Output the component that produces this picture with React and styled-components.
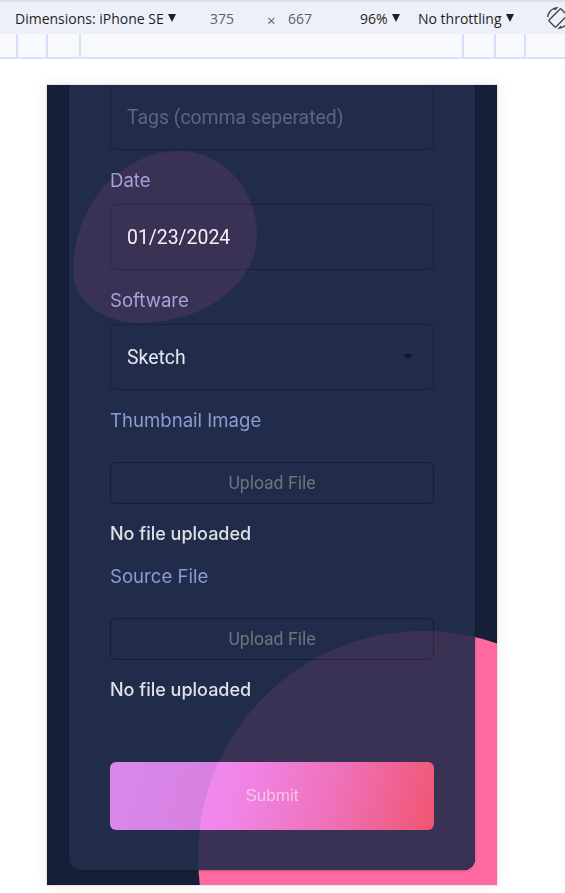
import React from 'react';
import styled, { createGlobalStyle } from 'styled-components';
import { MdScreenRotation } from 'react-icons/md';

const GlobalStyle = createGlobalStyle`
  html, body { margin: 0; padding: 0; background: #ffffff; }
  body { font-family: "Liberation Sans", Arial, sans-serif; }
  * { box-sizing: border-box; }
`;

const Page = styled.div`
  width: 565px;
  height: 893px;
  overflow: hidden;
  display: flex;
  flex-direction: column;
  background: #ffffff;
`;

const Toolbar = styled.div`
  flex: none;
  height: 34px;
  border-top: 2px solid #dcdfe5;
  background: #edf0f8;
  display: grid;
  grid-template-columns: 195px 57px 21px 72px 58px 129px 1fr;
  align-items: center;
  padding-left: 15px;
  font-family: "Open Sans", sans-serif;
  font-size: 14px;
  color: #1f1f1f;
  white-space: nowrap;
  overflow: hidden;
`;

const ToolItem = styled.span`
  display: inline-flex;
  align-items: center;
  color: ${(p) => (p.$muted ? '#5e6166' : '#1f1f1f')};
`;

const Caret = styled.span`
  width: 0;
  height: 0;
  border-left: 4.5px solid transparent;
  border-right: 4.5px solid transparent;
  border-top: 8px solid #1f1f1f;
  margin-left: 4px;
`;

const Times = styled.span`
  font-size: 15px;
  color: #5e6166;
  padding-top: 4px;
`;

const RotateIcon = styled(MdScreenRotation)`
  width: 22px;
  height: 22px;
  color: #474747;
  transform: scaleX(-1);
`;

const Ruler = styled.div`
  flex: none;
  height: 25px;
  background: #f7f9fd;
  border-bottom: 2px solid #d6e3fa;
  display: flex;
`;

const Mark = styled.span`
  width: 2px;
  height: 100%;
  background: #d3e0f8;
  margin-left: ${(p) => p.$gap}px;
`;

const Viewport = styled.div`
  flex: 1;
  padding: 26px 0 0 47px;
  background: #ffffff;
`;

const Screen = styled.div`
  position: relative;
  width: 450px;
  height: 800px;
  background: #171f38;
  overflow: hidden;
  display: flex;
  flex-direction: column;
  justify-content: flex-end;
  padding: 0 22px 15px;
  box-shadow: 0 0 0 1px #e4e4e4, 0 0 14px rgba(0, 0, 0, 0.07);
`;

const BigCircle = styled.div`
  position: absolute;
  left: 151px;
  top: 546px;
  width: 450px;
  height: 450px;
  border-radius: 50%;
  background: #ff6ba0;
`;

const Card = styled.div`
  position: relative;
  z-index: 1;
  flex: none;
  background: #212b4a;
  border-radius: 12px;
  padding: 30px 41px 40px;
  display: flex;
  flex-direction: column;
  overflow: hidden;
  box-shadow: 0 1px 3px rgba(0, 0, 0, 0.25);
`;

const Tint = styled.div`
  position: absolute;
  z-index: 2;
  pointer-events: none;
  background: rgb(25, 7, 10);
  mix-blend-mode: plus-lighter;
`;

const CircleTint = styled(Tint)`
  left: 129px;
  bottom: -211px;
  width: 450px;
  height: 450px;
  border-radius: 50%;
`;

const BlobTint = styled(Tint)`
  left: 4px;
  bottom: 547px;
  width: 184px;
  height: 172px;
  border-radius: 58% 42% 64% 36% / 70% 49% 51% 30%;
`;

const Label = styled.label`
  display: block;
  font-family: Inter, "Liberation Sans", sans-serif;
  font-size: 18.6px;
  line-height: 24px;
  color: #8c9bd0;
  margin: 18px 0 ${(p) => (p.$file ? 30 : 12)}px;
`;

const Field = styled.input`
  display: block;
  width: 100%;
  height: 66px;
  margin: 0;
  padding: 0 16px;
  background: transparent;
  border: 1px solid #1a2139;
  border-radius: 6px;
  font-family: Roboto, "Liberation Sans", sans-serif;
  font-size: 19.4px;
  color: #e4e5ee;
  outline: none;
  &::placeholder {
    color: #5d6583;
  }
`;

const SelectWrap = styled.div`
  position: relative;
`;

const Select = styled.select`
  display: block;
  width: 100%;
  height: 66px;
  margin: 0;
  padding: 0 16px;
  appearance: none;
  background: transparent;
  border: 1px solid #1a2139;
  border-radius: 6px;
  font-family: Roboto, "Liberation Sans", sans-serif;
  font-size: 19.4px;
  color: #e4e5ee;
  outline: none;
`;

const Arrow = styled.svg`
  position: absolute;
  right: 21px;
  top: 30px;
  width: 10px;
  height: 5px;
  pointer-events: none;
`;

const Upload = styled.button`
  display: block;
  width: 100%;
  height: 42px;
  margin: 0;
  padding: 0;
  background: transparent;
  border: 1px solid #171c2b;
  border-radius: 6px;
  font-family: Roboto, "Liberation Sans", sans-serif;
  font-size: 17.6px;
  color: #70737c;
  cursor: pointer;
`;

const Status = styled.p`
  margin: 18px 0 0;
  font-family: Inter, "Liberation Sans", sans-serif;
  font-size: 18px;
  font-weight: 500;
  line-height: 24px;
  color: #e0e1e7;
`;

const Submit = styled.button`
  display: block;
  width: 100%;
  height: 68px;
  margin: 60px 0 0;
  padding: 0;
  border: none;
  border-radius: 6px;
  background: linear-gradient(105deg, #d988ea 0%, #d77fe0 38%, #d66ab0 68%, #d74e66 100%);
  font-family: "Liberation Sans", Arial, sans-serif;
  font-size: 17px;
  color: #dcbfdd;
  cursor: pointer;
`;

export default function App() {
  return (
    <Page>
      <GlobalStyle />
      <Toolbar>
        <ToolItem>
          Dimensions: iPhone SE
          <Caret />
        </ToolItem>
        <ToolItem $muted>375</ToolItem>
        <Times>×</Times>
        <ToolItem $muted>667</ToolItem>
        <ToolItem>
          96%
          <Caret />
        </ToolItem>
        <ToolItem>
          No throttling
          <Caret />
        </ToolItem>
        <ToolItem>
          <RotateIcon />
        </ToolItem>
      </Toolbar>
      <Ruler>
        <Mark $gap={16} />
        <Mark $gap={28} />
        <Mark $gap={31} />
        <Mark $gap={381} />
        <Mark $gap={30} />
        <Mark $gap={28} />
      </Ruler>
      <Viewport>
        <Screen>
          <BigCircle />
          <Card>
            <Field placeholder="Tags (comma seperated)" readOnly />
            <Label>Date</Label>
            <Field value="01/23/2024" readOnly />
            <Label>Software</Label>
            <SelectWrap>
              <Select defaultValue="Sketch">
                <option>Sketch</option>
                <option>Figma</option>
                <option>Adobe XD</option>
              </Select>
              <Arrow viewBox="0 0 10 5">
                <path d="M0 0 L10 0 L5 5 Z" fill="#11172a" />
              </Arrow>
            </SelectWrap>
            <Label $file>Thumbnail Image</Label>
            <Upload type="button">Upload File</Upload>
            <Status>No file uploaded</Status>
            <Label $file>Source File</Label>
            <Upload type="button">Upload File</Upload>
            <Status>No file uploaded</Status>
            <Submit type="button">Submit</Submit>
            <BlobTint />
            <CircleTint />
          </Card>
        </Screen>
      </Viewport>
    </Page>
  );
}
